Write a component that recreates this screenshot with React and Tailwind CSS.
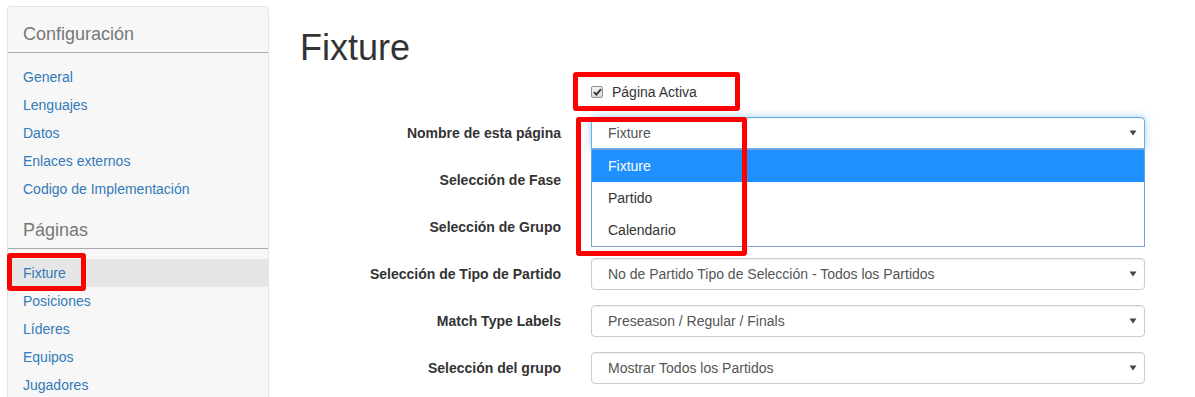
import React from "react";

function Arrow() {
  return (
    <svg width="8" height="6" viewBox="0 0 8 6" className="absolute right-[7px] top-1/2 -translate-y-1/2">
      <path d="M0.5 0.5 L7.5 0.5 L4 5.5 Z" fill="#444" />
    </svg>
  );
}

function Select({ value, focused, children }) {
  return (
    <div
      className={
        "relative w-[554px] h-[32px] bg-white flex items-center pl-[16px] text-[14px] text-[#555] " +
        (focused
          ? "border border-[#66afe9] rounded-t-[4px] shadow-[inset_0_1px_1px_rgba(0,0,0,0.075),0_0_8px_rgba(102,175,233,0.6)]"
          : "border border-[#ccc] rounded-[4px] shadow-[inset_0_1px_1px_rgba(0,0,0,0.075)]")
      }
    >
      <span>{value}</span>
      <Arrow />
      {children}
    </div>
  );
}

function Row({ label, children }) {
  return (
    <div className="flex items-center h-[32px]">
      <div className="w-[261px] text-right font-bold text-[14px] text-[#333]">{label}</div>
      <div className="ml-[30px]">{children}</div>
    </div>
  );
}

export default function App() {
  const config = ["General", "Lenguajes", "Datos", "Enlaces externos", "Codigo de Implementación"];
  const pages = ["Fixture", "Posiciones", "Líderes", "Equipos", "Jugadores"];
  return (
    <div className="relative flex bg-white h-[397px] overflow-hidden font-['Liberation_Sans',Arial,sans-serif]">
      {/* Sidebar */}
      <div className="pl-[7px] pt-[6px] w-[269px] shrink-0">
        <div className="bg-[#f7f7f7] border border-[#e3e3e3] rounded-t-[4px] pb-[20px]">
          <div className="px-[15px] pt-[17px] pb-[8px] text-[18px] leading-[20px] text-[#777] border-b border-[#aaa]">
            Configuración
          </div>
          <div className="pt-[10px]">
            {config.map((c) => (
              <div key={c} className="h-[28px] flex items-center px-[15px] text-[14px] text-[#337ab7]">
                {c}
              </div>
            ))}
          </div>
          <div className="px-[15px] pt-[17px] pb-[8px] text-[18px] leading-[20px] text-[#777] border-b border-[#aaa]">
            Páginas
          </div>
          <div className="pt-[10px]">
            {pages.map((c, i) => (
              <div
                key={c}
                className={
                  "h-[28px] flex items-center px-[15px] text-[14px] text-[#337ab7] " +
                  (i === 0 ? "bg-[#e6e6e6]" : "")
                }
              >
                {c}
              </div>
            ))}
          </div>
        </div>
      </div>

      {/* Main */}
      <div className="ml-[31px] pt-[28px]">
        <h1 className="text-[36px] leading-[40px] text-[#333] font-normal">Fixture</h1>
        <div className="mt-[14px] h-[20px] pl-[291px] flex items-center">
          <div className="w-[12px] h-[12px] border border-[#8f8f8f] rounded-[2px] bg-gradient-to-b from-[#f4f4f4] to-[#d8d8d8] flex items-center justify-center">
            <svg width="9" height="8" viewBox="0 0 9 8">
              <path d="M1 4.2 L3.4 6.6 L8 1.2" stroke="#333" strokeWidth="1.8" fill="none" />
            </svg>
          </div>
          <span className="ml-[9px] text-[14px] text-[#333]">Página Activa</span>
        </div>
        <div className="mt-[15px] flex flex-col gap-[15px]">
          <Row label="Nombre de esta página">
            <Select value="Fixture" focused>
              <div className="absolute left-[-1px] top-[31px] w-[554px] z-10 bg-white border border-[#7b9fd6] text-[14px]">
                <div className="h-[32px] flex items-center pl-[16px] bg-[#1e90ff] text-white">Fixture</div>
                <div className="h-[32px] flex items-center pl-[16px] text-[#333]">Partido</div>
                <div className="h-[32px] flex items-center pl-[16px] text-[#333]">Calendario</div>
              </div>
            </Select>
          </Row>
          <Row label="Selección de Fase">
            <Select value="" />
          </Row>
          <Row label="Selección de Grupo">
            <Select value="" />
          </Row>
          <Row label="Selección de Tipo de Partido">
            <Select value="No de Partido Tipo de Selección - Todos los Partidos" />
          </Row>
          <Row label="Match Type Labels">
            <Select value="Preseason / Regular / Finals" />
          </Row>
          <Row label="Selección del grupo">
            <Select value="Mostrar Todos los Partidos" />
          </Row>
        </div>
      </div>

      {/* Annotation boxes */}
      <div className="absolute left-[7px] top-[253px] w-[79px] h-[38px] border-[5px] border-[#ff0000] rounded-[3px] z-20" />
      <div className="absolute left-[573px] top-[72px] w-[167px] h-[39px] border-[5px] border-[#ff0000] rounded-[3px] z-20" />
      <div className="absolute left-[576px] top-[117px] w-[171px] h-[139px] border-[5px] border-[#ff0000] rounded-[3px] z-20" />
    </div>
  );
}
